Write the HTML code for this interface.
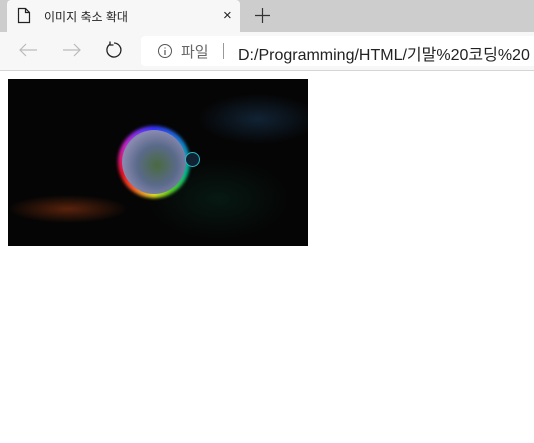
<!DOCTYPE html><html><head><meta charset="utf-8"><style>
body{margin:0;width:534px;height:443px;overflow:hidden;background:#fff;font-family:"Liberation Sans","Noto Sans CJK KR",sans-serif;position:relative}
.a{position:absolute}
</style></head><body>
<div class="a" style="left:0;top:0;width:534px;height:32px;background:#cdcdcd"></div>
<div class="a" style="left:7px;top:0;width:233px;height:32px;background:#f7f7f7;border-radius:4px 4px 0 0"></div>
<svg class="a" style="left:17px;top:7px" width="14" height="17"><path d="M1.5 1.5h7l4 4v10h-11z M8.5 1.5v4h4" fill="none" stroke="#222" stroke-width="1.2"/></svg>
<div class="a" style="left:44px;top:8px;font-size:12px;color:#222">이미지 축소 확대</div>
<div class="a" style="left:223px;top:7px;font-size:15px;color:#222">×</div>
<svg class="a" style="left:255px;top:8px" width="15" height="15"><path d="M7.5 0v15M0 7.5h15" stroke="#333" stroke-width="1.2"/></svg>
<div class="a" style="left:0;top:32px;width:534px;height:38px;background:#f7f7f7"></div>
<div class="a" style="left:0;top:70px;width:534px;height:1px;background:#d5d5d5"></div>
<svg class="a" style="left:18px;top:42px" width="20" height="16"><path d="M19 8H2M8 2L2 8l6 6" fill="none" stroke="#bbb" stroke-width="1.2"/></svg>
<svg class="a" style="left:62px;top:42px" width="20" height="16"><path d="M1 8h17M12 2l6 6-6 6" fill="none" stroke="#bbb" stroke-width="1.2"/></svg>
<svg class="a" style="left:105px;top:41px" width="18" height="18"><path d="M5 3.2A7 7 0 1 0 9 2" fill="none" stroke="#222" stroke-width="1.3"/><path d="M5 0.5V4H8.5" fill="none" stroke="#222" stroke-width="1.3"/></svg>
<div class="a" style="left:141px;top:36px;width:400px;height:30px;background:#fff;border-radius:4px"></div>
<svg class="a" style="left:157px;top:43px" width="16" height="16"><circle cx="8" cy="8" r="6.5" fill="none" stroke="#555" stroke-width="1"/><path d="M8 7v5M8 4.5v1" stroke="#555" stroke-width="1.2"/></svg>
<div class="a" style="left:181px;top:41px;font-size:15px;color:#666">파일</div>
<div class="a" style="left:223px;top:43px;width:1px;height:16px;background:#999"></div>
<div class="a" style="left:238px;top:41px;font-size:16px;color:#222;white-space:nowrap">D:/Programming/HTML/기말%20코딩%20</div>
<div class="a" style="left:8px;top:79px;width:300px;height:167px;overflow:hidden;background:
radial-gradient(ellipse 60px 14px at 60px 130px,rgba(190,70,20,.45),transparent),
radial-gradient(ellipse 60px 25px at 250px 40px,rgba(40,90,140,.35),transparent),
radial-gradient(ellipse 70px 40px at 210px 120px,rgba(10,60,45,.35),transparent),
#050505">
<div class="a" style="left:110px;top:47px;width:72px;height:72px;border-radius:50%;background:conic-gradient(from 0deg,#33f,#18c 60deg,#0b8 110deg,#5c2 150deg,#dd2 180deg,#f52 220deg,#e12 250deg,#c2c 300deg,#63f 340deg,#33f);filter:blur(1.5px)"></div>
<div class="a" style="left:114px;top:51px;width:64px;height:64px;border-radius:50%;background:radial-gradient(circle at 55% 55%,#4a6a40,#5a6a8a 40%,#8a8ab0 70%,#3a3a70)"></div>
<div class="a" style="left:177px;top:73px;width:13px;height:13px;border-radius:50%;background:#123;border:1px solid #2bc"></div>
</div>
</body></html>
